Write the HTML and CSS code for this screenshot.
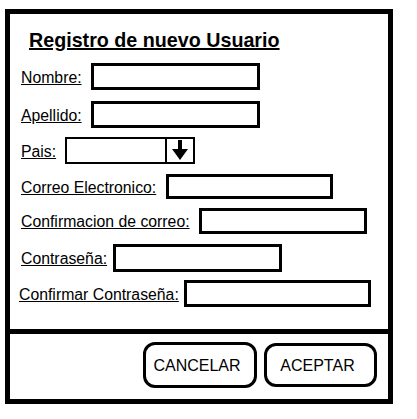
FILE: index.html
```html
<!DOCTYPE html>
<html lang="es">
<head>
<meta charset="utf-8">
<title>Registro de nuevo Usuario</title>
<link rel="stylesheet" href="styles.css">
</head>
<body>
<div class="frame">
  <form class="form">
    <h1 class="title">Registro de nuevo Usuario</h1>
    <div class="rows">
      <div class="row">
        <label class="lbl">Nombre:</label>
        <input class="box box-nombre" type="text">
      </div>
      <div class="row">
        <label class="lbl">Apellido:</label>
        <input class="box box-apellido" type="text">
      </div>
      <div class="row">
        <label class="lbl">Pais:</label>
        <div class="select">
          <div class="select-value"></div>
          <div class="select-btn">
            <svg width="26" height="23" viewBox="0 0 26 23">
              <rect x="11" y="1" width="4" height="10" fill="#000"/>
              <polygon points="5,10 21,10 13,21" fill="#000"/>
            </svg>
          </div>
        </div>
      </div>
      <div class="row">
        <label class="lbl">Correo Electronico:</label>
        <input class="box box-correo" type="text">
      </div>
      <div class="row">
        <label class="lbl">Confirmacion de correo:</label>
        <input class="box box-confcorreo" type="text">
      </div>
      <div class="row">
        <label class="lbl">Contraseña:</label>
        <input class="box box-pass" type="text">
      </div>
      <div class="row row-shift">
        <label class="lbl">Confirmar Contraseña:</label>
        <input class="box box-confpass" type="text">
      </div>
    </div>
  </form>
  <div class="footer">
    <button class="btn btn-cancel" type="button">CANCELAR</button>
    <button class="btn btn-accept" type="button">ACEPTAR</button>
  </div>
</div>
</body>
</html>
```
FILE: styles.css
```css
html, body {
  margin: 0;
  padding: 0;
  background: #fff;
}

body {
  font-family: "Liberation Sans", Arial, sans-serif;
  color: #000;
}

.frame {
  margin: 9px 0 0 5px;
  width: 388px;
  height: 395px;
  border: 5px solid #000;
  box-sizing: border-box;
  display: flex;
  flex-direction: column;
}

.form {
  height: 315px;
  margin: 0;
  padding: 15px 0 0 11px;
  box-sizing: border-box;
}

.title {
  margin: 0 0 11px 8px;
  font-size: 19.7px;
  line-height: 23px;
  font-weight: bold;
  text-decoration: underline;
  text-decoration-thickness: 2px;
  text-underline-offset: 1px;
}

.rows {
  display: grid;
  grid-template-rows: 38px 36px 37px 34px 36px 36px 27px;
}

.row {
  display: flex;
  align-items: center;
  align-self: start;
}

.row-shift {
  margin-left: -2px;
}

.lbl {
  font-size: 15.8px;
  line-height: 18px;
  text-decoration: underline;
  text-underline-offset: 1px;
  white-space: nowrap;
  position: relative;
  top: 1px;
}

.box {
  display: block;
  margin: 0;
  padding: 0;
  border: 3px solid #000;
  border-radius: 0;
  background: #fff;
  box-sizing: border-box;
  outline: none;
}

.box-nombre { width: 169px; height: 27px; margin-left: 9.5px; }
.box-apellido { width: 169px; height: 27px; margin-left: 9.5px; }
.box-correo { width: 167px; height: 25px; margin-left: 10px; }
.box-confcorreo { width: 168px; height: 26px; margin-left: 9.5px; }
.box-pass { width: 169px; height: 28px; margin-left: 6px; }
.box-confpass { width: 187px; height: 27px; margin-left: 5px; }

.select {
  margin-left: 9px;
  width: 130px;
  height: 27px;
  border: 2px solid #000;
  box-sizing: border-box;
  display: flex;
}

.select-value {
  flex: 1;
}

.select-btn {
  width: 26px;
  border-left: 2px solid #000;
  display: flex;
}

.footer {
  flex: 1;
  border-top: 5px solid #000;
  display: flex;
  justify-content: flex-end;
  align-items: flex-start;
  gap: 7px;
  padding: 8px 11px 0 0;
}

.btn {
  margin: 0;
  border: 3px solid #000;
  border-radius: 12px;
  background: #fff;
  color: #000;
  font-family: "Liberation Sans", Arial, sans-serif;
  font-size: 16px;
  padding: 2px 6px 0 0;
  box-sizing: border-box;
}

.btn-cancel { width: 114px; height: 46px; }
.btn-accept { width: 113px; height: 44px; margin-top: 1px; }
```
